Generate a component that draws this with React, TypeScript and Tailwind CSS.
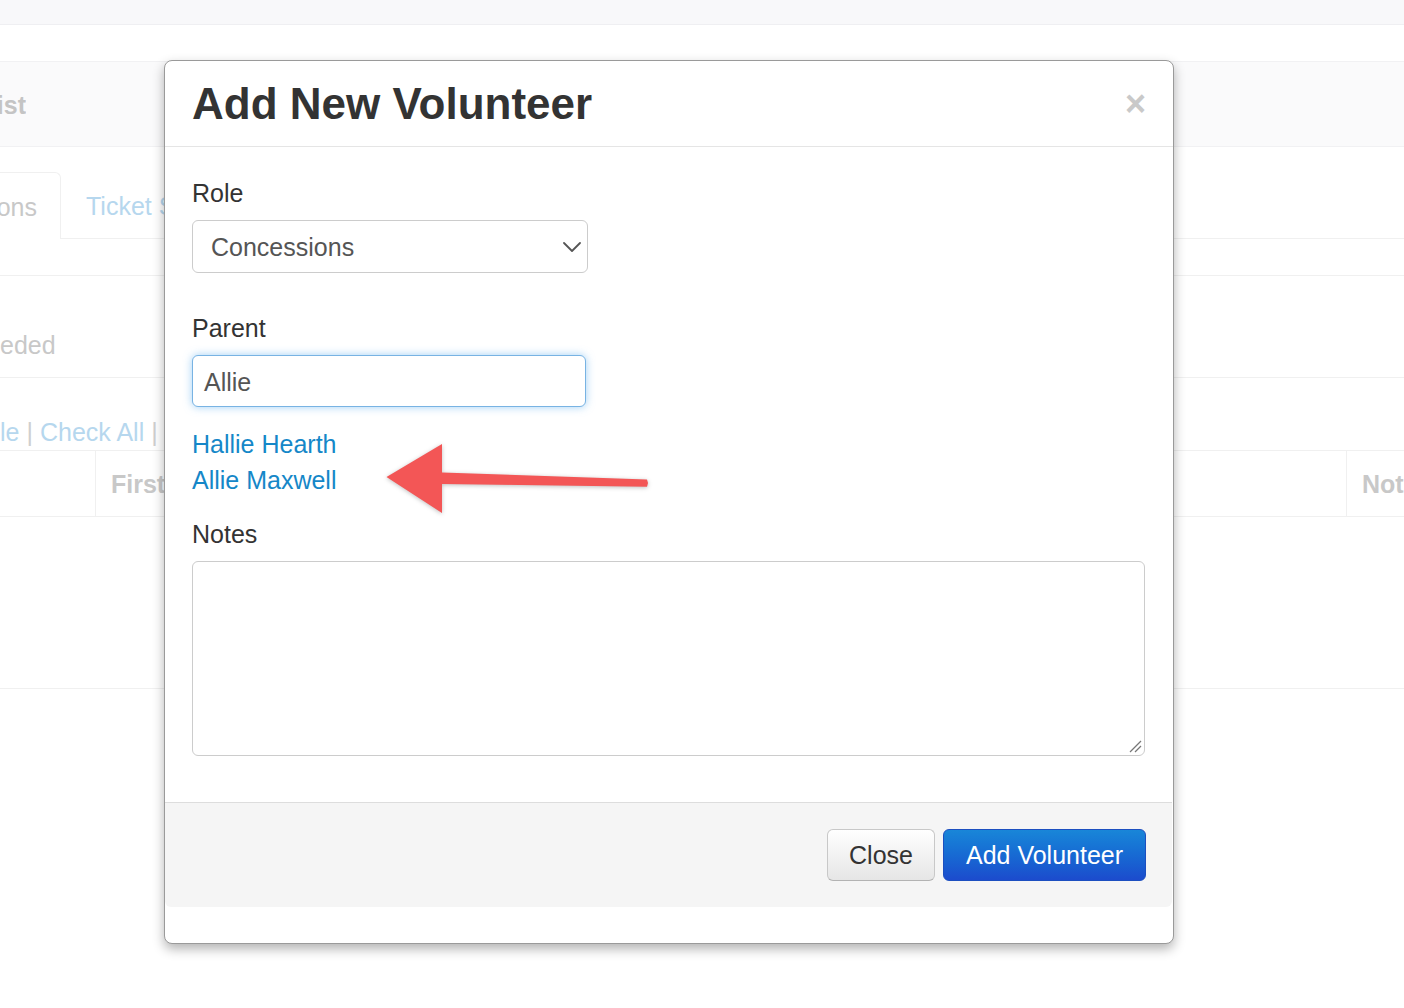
import React from "react";

const font = "font-['Liberation_Sans','Helvetica',Arial,sans-serif]";

function Chevron() {
  return (
    <svg width="18" height="10" viewBox="0 0 18 10" className="shrink-0">
      <polyline points="1,1 9,9 17,1" fill="none" stroke="#555" strokeWidth="1.8" strokeLinecap="round" strokeLinejoin="round" />
    </svg>
  );
}

function ResizeGrip() {
  return (
    <svg width="14" height="14" viewBox="0 0 14 14">
      <line x1="2" y1="13" x2="13" y2="2" stroke="#777" strokeWidth="1.2" />
      <line x1="7" y1="13" x2="13" y2="7" stroke="#777" strokeWidth="1.2" />
    </svg>
  );
}

// faded page that sits behind the modal
function PageBehind() {
  return (
    <div className="flex flex-col">
      <div className="h-[25px] border-b border-[#efeff2] bg-[#f8f8fa]" />
      <div className="h-[36px]" />
      <div className="flex h-[86px] items-center border-y border-[#f1f1f3] bg-[#fafafb] pt-[4px]">
        <div className="flex w-[26px] justify-end overflow-hidden whitespace-nowrap text-[25px] font-bold text-[#c4c4c4]">
          Volunteer List
        </div>
      </div>
      <div className="h-[25px]" />
      <div className="flex h-[67px] items-end border-b border-[#f0f0f0]">
        <div className="-mb-px flex h-[67px] w-[61px] items-center justify-end overflow-hidden whitespace-nowrap rounded-tr-[6px] border-r border-t border-[#f0f0f0] bg-white pr-[23px] pt-[4px] text-[25px] text-[#c8c8c8]">
          Concessions
        </div>
        <div className="ml-[25px] flex h-[67px] w-[78px] items-center overflow-hidden whitespace-nowrap pt-[4px] text-[25px] text-[#b6d7ee]">
          Ticket Sales
        </div>
      </div>
      <div className="h-[36px]" />
      <div className="h-[103px] border-y border-[#f0f0f0] pt-[51px]">
        <div className="text-[25px] leading-[36px] text-[#c8c8c8]">eded</div>
      </div>
      <div className="mt-[36px] flex whitespace-nowrap text-[25px] leading-[36px]">
        <span className="text-[#b6d7ee]">le</span>
        <span className="px-[7px] text-[#cfcfcf]">|</span>
        <span className="text-[#b6d7ee]">Check All</span>
        <span className="px-[7px] text-[#cfcfcf]">|</span>
      </div>
      <div className="flex h-[67px] border-y border-[#f0f0f0]">
        <div className="w-[96px] border-r border-[#f0f0f0]" />
        <div className="flex w-[68px] items-center overflow-hidden whitespace-nowrap pl-[15px] pt-[2px] text-[25px] font-bold text-[#c8c8c8]">
          First Name
        </div>
        <div className="ml-auto flex w-[58px] items-center overflow-hidden whitespace-nowrap border-l border-[#f0f0f0] pl-[15px] pt-[2px] text-[25px] font-bold text-[#c8c8c8]">
          Not
        </div>
      </div>
      <div className="h-[172px] border-b border-[#f0f0f0]" />
    </div>
  );
}

export default function App() {
  return (
    <div className={`relative h-[1008px] w-[1404px] overflow-hidden bg-white ${font}`}>
      <PageBehind />

      {/* modal */}
      <div className="absolute left-[164px] top-[60px] flex h-[884px] w-[1010px] flex-col rounded-[8px] border border-[#9a9a9a] bg-white shadow-[0_5px_12px_rgba(0,0,0,0.3)]">
        <div className="flex h-[86px] shrink-0 items-center border-b border-[#e5e5e5] pl-[27px] pr-[27px]">
          <h3 className="text-[44px] font-bold leading-[49px] text-[#333]">Add New Volunteer</h3>
          <span className="ml-auto text-[36px] font-bold leading-none text-[#c9c9c9]">×</span>
        </div>

        <div className="flex h-[655px] shrink-0 flex-col px-[27px] pt-[28px]">
          <label className="mb-[9px] text-[25px] leading-[36px] text-[#333]">Role</label>
          <div className="flex h-[53px] w-[396px] items-center rounded-[6px] border border-[#cccccc] bg-white pl-[18px] pr-[6px] pt-[3px] text-[25px] text-[#555]">
            <span>Concessions</span>
            <span className="ml-auto -mt-[3px]">
              <Chevron />
            </span>
          </div>

          <label className="mb-[9px] mt-[37px] text-[25px] leading-[36px] text-[#333]">Parent</label>
          <div className="flex h-[52px] w-[394px] items-center rounded-[6px] border border-[#78b3e3] bg-white pl-[11px] pt-[3px] text-[25px] text-[#555] shadow-[0_0_9px_rgba(82,168,236,0.55)]">
            Allie
          </div>

          <div className="mt-[19px] flex flex-col text-[25px] leading-[36px] text-[#1587c8]">
            <span>Hallie Hearth</span>
            <span>Allie Maxwell</span>
          </div>

          <label className="mb-[9px] mt-[18px] text-[25px] leading-[36px] text-[#333]">Notes</label>
          <div className="flex h-[195px] w-[953px] items-end justify-end rounded-[6px] border border-[#cccccc] bg-white p-[2px]">
            <ResizeGrip />
          </div>
        </div>

        <div className="mr-px flex h-[105px] shrink-0 items-center justify-end gap-[8px] rounded-b-[6px] border-t border-[#dddddd] bg-[#f5f5f5] pr-[26px]">
          <button className="h-[52px] w-[108px] rounded-[6px] border border-[#c8c8c8] border-b-[#b3b3b3] bg-gradient-to-b from-white to-[#e6e6e6] pt-[2px] text-[25px] text-[#333]">
            Close
          </button>
          <button className="h-[52px] w-[203px] rounded-[6px] border border-[#1c4fc0] bg-gradient-to-b from-[#1986d8] to-[#1c4bcd] pt-[2px] text-[25px] text-white">
            Add Volunteer
          </button>
        </div>
      </div>

      {/* annotation arrow */}
      <svg
        className="pointer-events-none absolute left-[380px] top-[438px] drop-shadow-[0_1px_2px_rgba(0,0,0,0.25)]"
        width="276"
        height="82"
        viewBox="0 0 276 82"
      >
        <polygon
          points="6.5,39 62,6 62,34.5 267,41.5 268,45 267,48.7 62,46 62,75"
          fill="#f35656"
        />
      </svg>
    </div>
  );
}
